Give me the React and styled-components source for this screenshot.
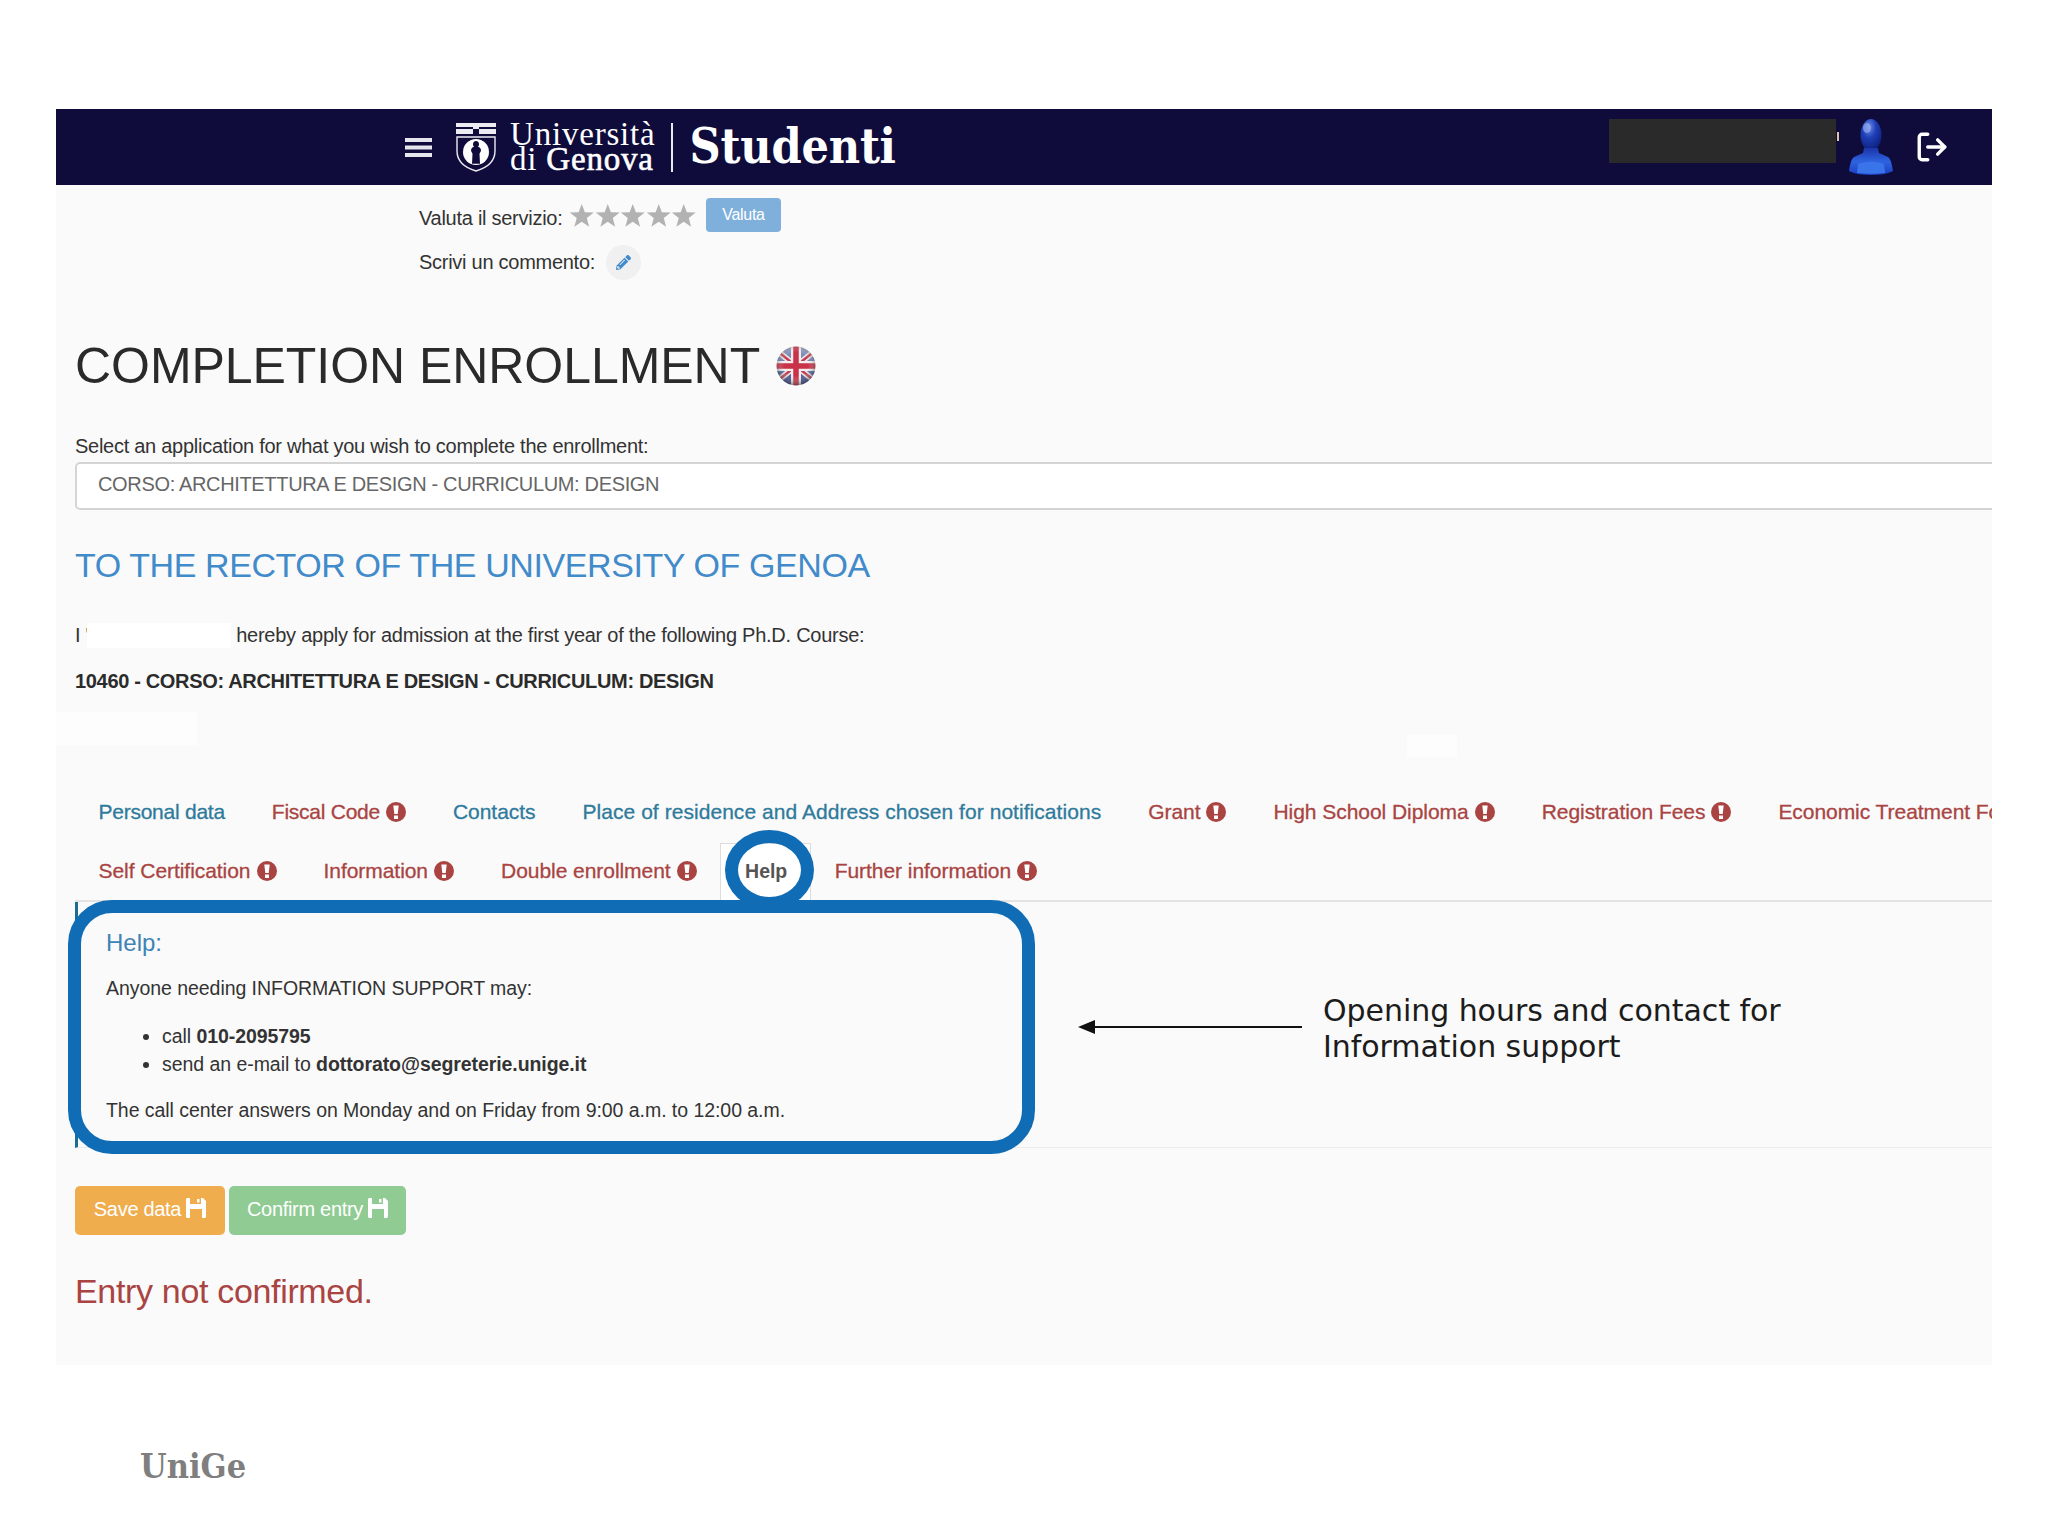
import React from "react";
import styled, { createGlobalStyle } from "styled-components";
import { FaPencilAlt } from "react-icons/fa";
import { LogOut } from "lucide-react";

const GlobalStyle = createGlobalStyle`
   html, body {
      margin: 0;
      background: #fff;
      font-family: "Liberation Sans", Arial, sans-serif;
      color: #333;
   }
`;

const Page = styled.div`
   width: 2048px;
   height: 1536px;
   padding-top: 109px;
   box-sizing: border-box;
   overflow: hidden;
`;

const Frame = styled.div`
   position: relative;
   margin-left: 56px;
   width: 1936px;
   height: 1256px;
   background: #fafafa;
   overflow: hidden;
`;

const Patch = styled.div`
   position: absolute;
   left: ${({ $left }) => $left}px;
   top: ${({ $top }) => $top}px;
   width: ${({ $width }) => $width}px;
   height: ${({ $height }) => $height}px;
   background: #fdfdfd;
`;

const Header = styled.header`
   height: 76px;
   background: #0f0c3c;
   display: flex;
   align-items: center;
   padding-left: 349px;
   color: #fff;
`;

const Logo = styled.div`
   display: flex;
   align-items: center;
   margin-left: 23px;
`;

const UniName = styled.div`
   margin-left: 13px;
   font-family: "Liberation Serif", serif;
   font-size: 33px;
   line-height: 25px;
   letter-spacing: 0.8px;
   b {
      font-weight: 400;
      -webkit-text-stroke: 0.6px #fff;
   }
`;

const Divider = styled.div`
   width: 2px;
   height: 49px;
   background: #e9e9ef;
   margin: 0 16px 0 16px;
`;

const Brand = styled.div`
   font-family: "DejaVu Serif Condensed", "DejaVu Serif", serif;
   font-weight: 700;
   font-size: 48px;
   line-height: 50px;
   letter-spacing: -0.2px;
   margin-top: -2px;
`;

const UserArea = styled.div`
   margin-left: auto;
   display: flex;
   align-items: center;
   padding-right: 43px;
`;

const Redaction = styled.div`
   width: 227px;
   height: 44px;
   margin-right: 13px;
   background: #2a2a2a;
   margin-top: -12px;
   position: relative;
   &::after {
      content: "";
      position: absolute;
      right: -3px;
      top: 13px;
      width: 2px;
      height: 9px;
      background: #d9c6a8;
   }
`;

const LogoutButton = styled.div`
   display: flex;
   margin-left: 22px;
   color: #fff;
`;

const Survey = styled.div`
   padding: 11px 0 0 363px;
`;

const SurveyRow = styled.div`
   height: 44px;
   display: flex;
   align-items: center;
   font-size: 20px;
   letter-spacing: -0.27px;
`;

const Stars = styled.div`
   display: flex;
   margin: -5px 0 0 7px;
   svg {
      display: block;
   }
`;

const RateButton = styled.div`
   margin: -6px 0 0 9px;
   width: 75px;
   height: 34px;
   border-radius: 4px;
   background: #7fb0dc;
   color: #fff;
   font-size: 16px;
   display: flex;
   align-items: center;
   justify-content: center;
`;

const PencilButton = styled.div`
   width: 35px;
   height: 35px;
   margin-left: 11px;
   border-radius: 50%;
   background: #f0f0f0;
   color: #428bca;
   font-size: 15px;
   display: flex;
   align-items: center;
   justify-content: center;
`;

const Content = styled.div`
   padding-left: 19px;
`;

const Title = styled.h1`
   margin: 52px 0 0;
   display: flex;
   align-items: center;
   height: 60px;
   font-size: 50px;
   font-weight: 400;
   letter-spacing: -0.05px;
   color: #2a2a2a;
   svg {
      margin-left: 16px;
   }
`;

const Label = styled.div`
   margin-top: 38px;
   font-size: 20px;
   line-height: 24px;
   letter-spacing: -0.27px;
`;

const SelectBox = styled.div`
   margin-top: 4px;
   width: 2000px;
   height: 48px;
   box-sizing: border-box;
   padding: 0 0 3px 21px;
   display: flex;
   align-items: center;
   background: #fff;
   border: 2px solid #d4d4d4;
   border-radius: 5px;
   font-size: 20px;
   letter-spacing: -0.34px;
   color: #666;
`;

const Rector = styled.h3`
   margin: 35px 0 0;
   font-size: 34px;
   line-height: 40px;
   font-weight: 400;
   letter-spacing: -0.41px;
   color: #428bca;
`;

const Statement = styled.p`
   margin: 38px 0 0;
   display: flex;
   font-size: 20px;
   line-height: 24px;
   letter-spacing: -0.25px;
   white-space: pre;
`;

const Blank = styled.span`
   display: inline-block;
   width: 144px;
   height: 25px;
   margin: 0 5px 0 -2px;
   background: #fff;
`;

const CourseLine = styled.p`
   margin: 21px 0 0;
   font-size: 20px;
   line-height: 24px;
   font-weight: 700;
   letter-spacing: -0.33px;
   color: #2b2b2b;
`;

const Tabs = styled.nav`
   margin-top: 89px;
`;

const TabRow = styled.div`
   display: flex;
   height: 59px;
   box-sizing: content-box;
   white-space: nowrap;
   border-bottom: ${({ $ruled }) => ($ruled ? "2px solid #e4e4e4" : "none")};
`;

const Tab = styled.div`
   position: relative;
   display: flex;
   align-items: center;
   gap: 6px;
   box-sizing: border-box;
   height: ${({ $active }) => ($active ? "57px" : "59px")};
   margin-top: ${({ $active }) => ($active ? "2px" : "0")};
   padding: ${({ $active }) => ($active ? "0 23px 2px 24px" : "0 23.5px")};
   font-size: ${({ $active }) => ($active ? "19.5px" : "21px")};
   font-weight: ${({ $active }) => ($active ? 700 : 400)};
   -webkit-text-stroke: ${({ $active }) => ($active ? "0" : "0.3px currentColor")};
   letter-spacing: ${({ $spacing }) => $spacing ?? -0.05}px;
   color: ${({ $warn, $active }) =>
      $active ? "#555" : $warn ? "#a94442" : "#2f7a9c"};
   background: ${({ $active }) => ($active ? "#fff" : "transparent")};
   border: ${({ $active }) => ($active ? "1px solid #ddd" : "none")};
   border-bottom: none;
`;

const TabRing = styled.span`
   position: absolute;
   left: 4px;
   top: -14px;
   width: 89px;
   height: 80px;
   box-sizing: border-box;
   border: 13px solid #0f6cb5;
   border-radius: 50%;
`;

const Pane = styled.section`
   position: relative;
   display: flex;
   align-items: center;
   height: 245px;
   box-sizing: content-box;
   border-left: 3px solid #1a6f90;
   border-bottom: 1px solid #ececec;
`;

const HelpBody = styled.div`
   width: 1000px;
   box-sizing: border-box;
   padding-left: 28px;
   flex-shrink: 0;
`;

const HelpHeading = styled.div`
   font-size: 24px;
   line-height: 30px;
   color: #3f83b5;
`;

const HelpText = styled.p`
   margin: ${({ $top }) => $top}px 0 0;
   font-size: 19.5px;
   line-height: 24px;
   letter-spacing: -0.05px;
`;

const HelpList = styled.ul`
   margin: 22px 0 0;
   padding-left: 56px;
   font-size: 19.5px;
   line-height: 28px;
   letter-spacing: -0.05px;
   b {
      letter-spacing: -0.08px;
   }
`;

const HelpOutline = styled.div`
   position: absolute;
   left: -10px;
   top: -2px;
   width: 967px;
   height: 254px;
   box-sizing: border-box;
   border: 13px solid #0f6cb5;
   border-radius: 44px;
`;

const Note = styled.div`
   display: flex;
   align-items: center;
   gap: 21px;
   padding-top: 8px;
   svg {
      margin-top: -4px;
   }
`;

const NoteText = styled.div`
   font-family: "DejaVu Sans", sans-serif;
   font-size: 30px;
   line-height: 36px;
   letter-spacing: -0.05px;
   color: #1c1c1c;
`;

const Actions = styled.div`
   display: flex;
   gap: 4px;
   margin-top: 38px;
`;

const ActionButton = styled.div`
   width: ${({ $width }) => $width}px;
   height: 49px;
   display: flex;
   align-items: center;
   justify-content: center;
   gap: 5px;
   padding-bottom: 2px;
   box-sizing: border-box;
   border-radius: 5px;
   background: ${({ $color }) => $color};
   color: #fff;
   font-size: 20px;
   letter-spacing: -0.3px;
`;

const Status = styled.div`
   margin-top: 34px;
   font-size: 34px;
   line-height: 44px;
   letter-spacing: -0.33px;
   color: #a94442;
`;

const Footer = styled.footer`
   margin: 79px 0 0 140px;
   font-family: "DejaVu Serif Condensed", "DejaVu Serif", serif;
   font-weight: 700;
   font-size: 34px;
   line-height: 44px;
   color: #7f7f7f;
`;

const firstRow = [
   { label: "Personal data", spacing: -0.25 },
   { label: "Fiscal Code", warn: true, spacing: -0.25 },
   { label: "Contacts" },
   { label: "Place of residence and Address chosen for notifications", spacing: 0.05 },
   { label: "Grant", warn: true },
   { label: "High School Diploma", warn: true },
   { label: "Registration Fees", warn: true },
   { label: "Economic Treatment Form", warn: true },
];

const secondRow = [
   { label: "Self Certification", warn: true },
   { label: "Information", warn: true },
   { label: "Double enrollment", warn: true },
   { label: "Help", active: true },
   { label: "Further information", warn: true },
];

const MenuIcon = () => (
   <svg width="27" height="19" viewBox="0 0 27 19">
      <path d="M0 0h27v4H0zM0 7.5h27v4H0zM0 15h27v4H0z" fill="#e6e6ee" />
   </svg>
);

const ShieldIcon = () => (
   <svg width="42" height="52" viewBox="0 0 42 50">
      <path d="M1 1h40v4H1zM1 7h17v5H1zM24 7h17v5H24zM18 1h6v11h-6z" fill="#ecebf2" />
      <path d="M18 7h6v5h-6z" fill="#0f0c3c" />
      <path d="M2 15h38v14c0 11-9 17-19 20C11 46 2 40 2 29z" fill="none" stroke="#ecebf2" strokeWidth="1.4" />
      <circle cx="21" cy="30" r="13" fill="#fff" />
      <path d="M21 19c2 0 3 1.6 3 3.4 0 1-.4 1.7-1 2.3 2 .6 3 2 3 4l-1.500 3 .5 10h-8l.5-10-1.500-3c0-2 1-3.400 3-4-.6-.6-1-1.300-1-2.300 0-1.800 1-3.400 3-3.400z" fill="#0f0c3c" />
   </svg>
);

const PersonIcon = () => (
   <svg width="44" height="56" viewBox="0 0 44 56">
      <defs>
         <radialGradient id="headGlow" cx="40%" cy="25%" r="75%">
            <stop offset="0" stopColor="#6f8fe8" />
            <stop offset="0.45" stopColor="#1f3fb8" />
            <stop offset="1" stopColor="#0d1f7c" />
         </radialGradient>
         <linearGradient id="bodyGlow" x1="0" y1="0" x2="0" y2="1">
            <stop offset="0" stopColor="#1a34a8" />
            <stop offset="0.5" stopColor="#2e63e0" />
            <stop offset="1" stopColor="#1b3fc0" />
         </linearGradient>
      </defs>
      <ellipse cx="22" cy="16" rx="10.500" ry="16" fill="url(#headGlow)" />
      <path d="M15 29h14l1 5 9 4c3 2 4 8 5 14-6 3-14 4-22 4S6 55 0 52c1-6 2-12 5-14l9-4z" fill="url(#bodyGlow)" />
      <path d="M9 45c8-3 18-3 26 0l1 9c-8 1-20 1-28 0z" fill="#3a74ea" />
      <ellipse cx="18" cy="9" rx="4" ry="5" fill="#9db4f2" opacity="0.6" />
   </svg>
);

const StarIcon = () => (
   <svg width="25.500" height="25" viewBox="0 0 25 25">
      <path d="M12.500 1l3.100 8.200 8.900.4-7 5.500 2.400 8.600-7.400-4.900-7.400 4.900 2.400-8.600-7-5.500 8.900-.4z" fill="#b2b2b2" />
   </svg>
);

const WarnIcon = () => (
   <svg width="20" height="20" viewBox="0 0 20 20">
      <circle cx="10" cy="10" r="10" fill="#a94442" />
      <path d="M7.300 3.500h5.400l-1 8.500H8.300zM8 13.500h4v3.500H8z" fill="#fff" />
   </svg>
);

const FlagIcon = () => (
   <svg width="40" height="40" viewBox="0 0 40 40">
      <defs>
         <clipPath id="flagClip">
            <circle cx="20" cy="20" r="19.500" />
         </clipPath>
         <radialGradient id="flagShade" cx="50%" cy="45%" r="55%">
            <stop offset="0.55" stopColor="#fff" stopOpacity="0.05" />
            <stop offset="1" stopColor="#333" stopOpacity="0.6" />
         </radialGradient>
         <linearGradient id="flagSky" x1="0" y1="0" x2="0" y2="1">
            <stop offset="0" stopColor="#8e9bc0" />
            <stop offset="0.5" stopColor="#5a6ba6" />
            <stop offset="1" stopColor="#27357e" />
         </linearGradient>
         <filter id="flagSoft">
            <feGaussianBlur stdDeviation="0.6" />
         </filter>
      </defs>
      <g clipPath="url(#flagClip)" filter="url(#flagSoft)">
         <rect width="40" height="40" fill="url(#flagSky)" />
         <path d="M0 4L40 36M40 4L0 36" stroke="#e9e4e6" strokeWidth="6" />
         <path d="M0 4L40 36M40 4L0 36" stroke="#c3334a" strokeWidth="2.400" />
         <path d="M20 0v40M0 20h40" stroke="#f1edee" strokeWidth="10" />
         <path d="M20 0v40M0 20h40" stroke="#c6283f" strokeWidth="5.500" />
         <circle cx="20" cy="20" r="20" fill="url(#flagShade)" />
      </g>
   </svg>
);

const ArrowIcon = () => (
   <svg width="224" height="16" viewBox="0 0 224 16">
      <path d="M16 8h208" stroke="#111" strokeWidth="2" />
      <path d="M0 8l17-7v14z" fill="#111" />
   </svg>
);

const DiskIcon = () => (
   <svg width="20" height="20" viewBox="0 0 20 20" style={{ marginTop: -4 }}>
      <path
         fill="#fff"
         fillRule="evenodd"
         d="M0 1.500C0 .7.7 0 1.500 0H4v6h11V0h2l3 3v15.500c0 .8-.7 1.500-1.500 1.500h-17C.7 20 0 19.300 0 18.500zM4 11v9h12v-9zM11 1h2.500v3.500H11z"
      />
   </svg>
);

const TabItem = ({ label, warn, active, spacing }) => (
   <Tab $warn={warn} $active={active} $spacing={spacing}>
      {label}
      {warn && <WarnIcon />}
      {active && <TabRing />}
   </Tab>
);

const App = () => {
   return (
      <Page>
         <GlobalStyle />
         <Frame>
            <Header>
               <MenuIcon />
               <Logo>
                  <ShieldIcon />
                  <UniName>
                     Università
                     <br />
                     di <b>Genova</b>
                  </UniName>
                  <Divider />
                  <Brand>Studenti</Brand>
               </Logo>
               <UserArea>
                  <Redaction />
                  <PersonIcon />
                  <LogoutButton>
                     <LogOut size={34} strokeWidth={2.4} />
                  </LogoutButton>
               </UserArea>
            </Header>

            <Survey>
               <SurveyRow>
                  Valuta il servizio:
                  <Stars>
                     {[1, 2, 3, 4, 5].map((n) => (
                        <StarIcon key={n} />
                     ))}
                  </Stars>
                  <RateButton>Valuta</RateButton>
               </SurveyRow>
               <SurveyRow>
                  Scrivi un commento:
                  <PencilButton>
                     <FaPencilAlt />
                  </PencilButton>
               </SurveyRow>
            </Survey>

            <Content>
               <Title>
                  COMPLETION ENROLLMENT
                  <FlagIcon />
               </Title>
               <Label>Select an application for what you wish to complete the enrollment:</Label>
               <SelectBox>CORSO: ARCHITETTURA E DESIGN - CURRICULUM: DESIGN</SelectBox>
               <Rector>TO THE RECTOR OF THE UNIVERSITY OF GENOA</Rector>
               <Statement>
                  {"I '"}
                  <Blank />
                  hereby apply for admission at the first year of the following Ph.D. Course:
               </Statement>
               <CourseLine>10460 - CORSO: ARCHITETTURA E DESIGN - CURRICULUM: DESIGN</CourseLine>

               <Tabs>
                  <TabRow>
                     {firstRow.map((tab) => (
                        <TabItem key={tab.label} {...tab} />
                     ))}
                  </TabRow>
                  <TabRow $ruled>
                     {secondRow.map((tab) => (
                        <TabItem key={tab.label} {...tab} />
                     ))}
                  </TabRow>
               </Tabs>

               <Pane>
                  <HelpBody>
                     <HelpHeading>Help:</HelpHeading>
                     <HelpText $top={18}>Anyone needing INFORMATION SUPPORT may:</HelpText>
                     <HelpList>
                        <li>
                           call <b>010-2095795</b>
                        </li>
                        <li>
                           send an e-mail to <b>dottorato@segreterie.unige.it</b>
                        </li>
                     </HelpList>
                     <HelpText $top={20}>
                        The call center answers on Monday and on Friday from 9:00 a.m. to 12:00 a.m.
                     </HelpText>
                  </HelpBody>
                  <Note>
                     <ArrowIcon />
                     <NoteText>
                        Opening hours and contact for
                        <br />
                        Information support
                     </NoteText>
                  </Note>
                  <HelpOutline />
               </Pane>

               <Actions>
                  <ActionButton $width={150} $color="#f0ad4e">
                     Save data <DiskIcon />
                  </ActionButton>
                  <ActionButton $width={177} $color="#8fcb92">
                     Confirm entry <DiskIcon />
                  </ActionButton>
               </Actions>
               <Status>Entry not confirmed.</Status>
            </Content>
            <Patch $left={0} $top={603} $width={141} $height={33} />
            <Patch $left={1351} $top={626} $width={50} $height={22} />
         </Frame>
         <Footer>UniGe</Footer>
      </Page>
   );
};

export default App;
